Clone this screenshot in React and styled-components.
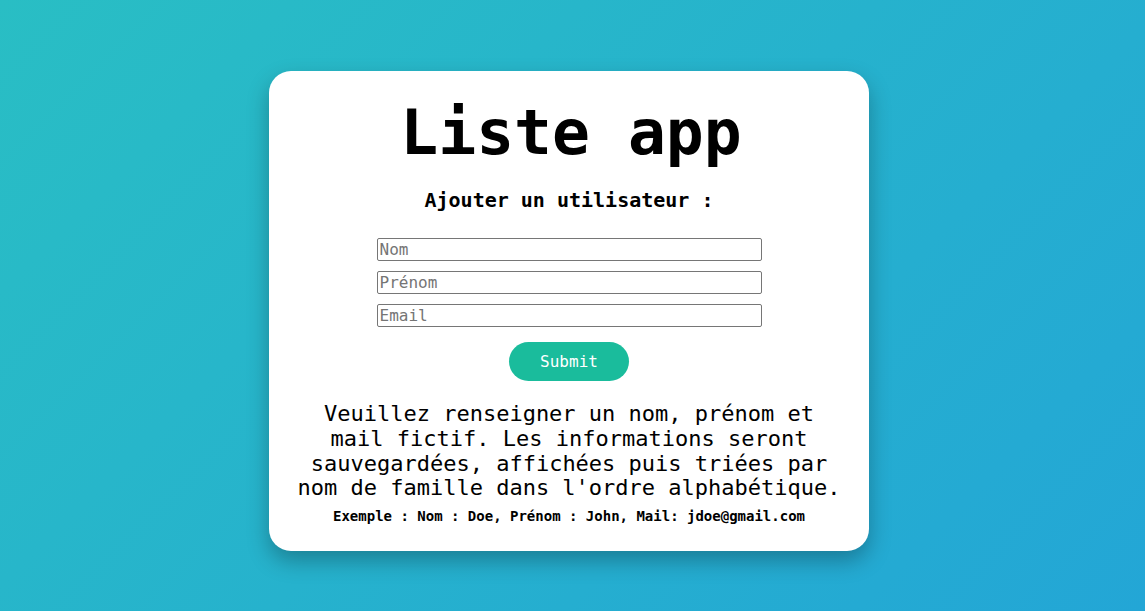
import React from "react";
import styled, { createGlobalStyle } from "styled-components";

const Global = createGlobalStyle`
  html, body { margin: 0; padding: 0; }
  body {
    min-height: 611px;
    background: linear-gradient(135deg, #29bec4 0%, #23a6d6 100%);
    font-family: "DejaVu Sans Mono", monospace;
  }
  * { box-sizing: border-box; }
`;

const Page = styled.main`
  display: flex;
  justify-content: center;
  padding: 71px 7px 0 0;
  min-height: 611px;
`;

const Card = styled.section`
  width: 600px;
  height: 480px;
  background: #ffffff;
  border-radius: 22px;
  box-shadow: 0 10px 22px rgba(0, 0, 0, 0.28);
  padding: 25px 26px 0;
  display: flex;
  flex-direction: column;
  align-items: center;
  text-align: center;
  color: #000;
`;

const Title = styled.h1`
  margin: 0;
  padding-left: 4px;
  font-size: 63px;
  font-weight: bold;
`;

const Subtitle = styled.h2`
  margin: 19px 0 0;
  font-size: 20px;
  font-weight: bold;
`;

const Form = styled.form`
  margin-top: 26px;
  display: flex;
  flex-direction: column;
  align-items: center;
  gap: 10px;
`;

const Field = styled.input`
  width: 385px;
  height: 23px;
  padding: 1px 2px;
  border: 1px solid #767676;
  border-radius: 2px;
  font-family: "DejaVu Sans Mono", monospace;
  font-size: 16px;
  color: #000;
  background: #fff;
  &::placeholder { color: #757575; }
`;

const Submit = styled.button`
  margin-top: 5px;
  width: 120px;
  height: 39px;
  border: none;
  border-radius: 20px;
  background: #1abc9c;
  color: #ffffff;
  font-family: "DejaVu Sans Mono", monospace;
  font-size: 16px;
  cursor: pointer;
`;

const Info = styled.p`
  margin: 21px 0 0;
  font-size: 22px;
  line-height: 24.8px;
`;

const Example = styled.p`
  margin: 7px 0 0;
  font-size: 14px;
  font-weight: bold;
`;

export default function App() {
  return (
    <>
      <Global />
      <Page>
        <Card>
          <Title>Liste app</Title>
          <Subtitle>Ajouter un utilisateur :</Subtitle>
          <Form onSubmit={(e) => e.preventDefault()}>
            <Field type="text" placeholder="Nom" />
            <Field type="text" placeholder="Prénom" />
            <Field type="email" placeholder="Email" />
            <Submit type="submit">Submit</Submit>
          </Form>
          <Info>
            Veuillez renseigner un nom, prénom et mail fictif. Les informations
            seront sauvegardées, affichées puis triées par nom de famille dans
            l'ordre alphabétique.
          </Info>
          <Example>Exemple : Nom : Doe, Prénom : John, Mail: jdoe@gmail.com</Example>
        </Card>
      </Page>
    </>
  );
}
